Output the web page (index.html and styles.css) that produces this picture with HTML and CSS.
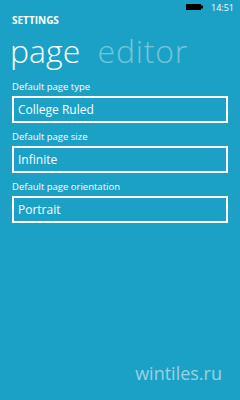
FILE: index.html
```html
<!DOCTYPE html>
<html>
<head>
    <title>Settings</title>
    <link rel="stylesheet" href="styles.css">
</head>
<body>

<div class="status">
    <svg class="battery" width="17" height="6" viewBox="0 0 17 6">
        <rect x="0" y="0" width="15" height="6" fill="#000"/>
        <rect x="15" y="1.5" width="2" height="3" fill="#000"/>
    </svg>
    <span class="time">14:51</span>
</div>

<div class="app-title">SETTINGS</div>
<div class="pivot">
    <span class="current">page</span>
    <span class="other">editor</span>
</div>

<div class="fields">
    <div class="field">
        <div class="label">Default page type</div>
        <div class="box">College Ruled</div>
    </div>
    <div class="field">
        <div class="label">Default page size</div>
        <div class="box">Infinite</div>
    </div>
    <div class="field">
        <div class="label">Default page orientation</div>
        <div class="box">Portrait</div>
    </div>
</div>

<div class="watermark">wintiles.ru</div>

</body>
</html>
```

FILE: styles.css
```css
html, body {
    margin: 0;
    height: 100%;
}
body {
    background: #1ba1c6;
    color: #fff;
    font-family: "Open Sans", "Noto Sans", sans-serif;
    width: 240px;
    height: 400px;
    position: relative;
    overflow: hidden;
}
.status {
    display: flex;
    justify-content: flex-end;
    align-items: center;
    height: 14px;
    padding-right: 6px;
}
.battery {
    margin-right: 8px;
}
.time {
    font-size: 9px;
    color: #fff;
}
.app-title {
    font-size: 10px;
    font-weight: 700;
    margin-left: 12px;
    line-height: 12px;
}
.pivot {
    font-size: 32px;
    font-weight: 300;
    line-height: 40px;
    margin-left: 10px;
    margin-top: 5px;
    white-space: nowrap;
    word-spacing: 9px;
}
.pivot .other {
    color: rgba(255, 255, 255, 0.4);
    letter-spacing: 0.8px;
}
.fields {
    margin: 9px 12px 0;
}
.field {
    margin-bottom: 7px;
}
.label {
    font-size: 9.5px;
    line-height: 13px;
    margin-bottom: 3px;
}
.box {
    border: 2px solid #fff;
    height: 23px;
    line-height: 23px;
    padding: 0 4px;
    font-size: 12px;
}
.watermark {
    position: absolute;
    right: 18px;
    bottom: 15px;
    font-size: 18px;
    color: rgba(255, 255, 255, 0.55);
}
```
